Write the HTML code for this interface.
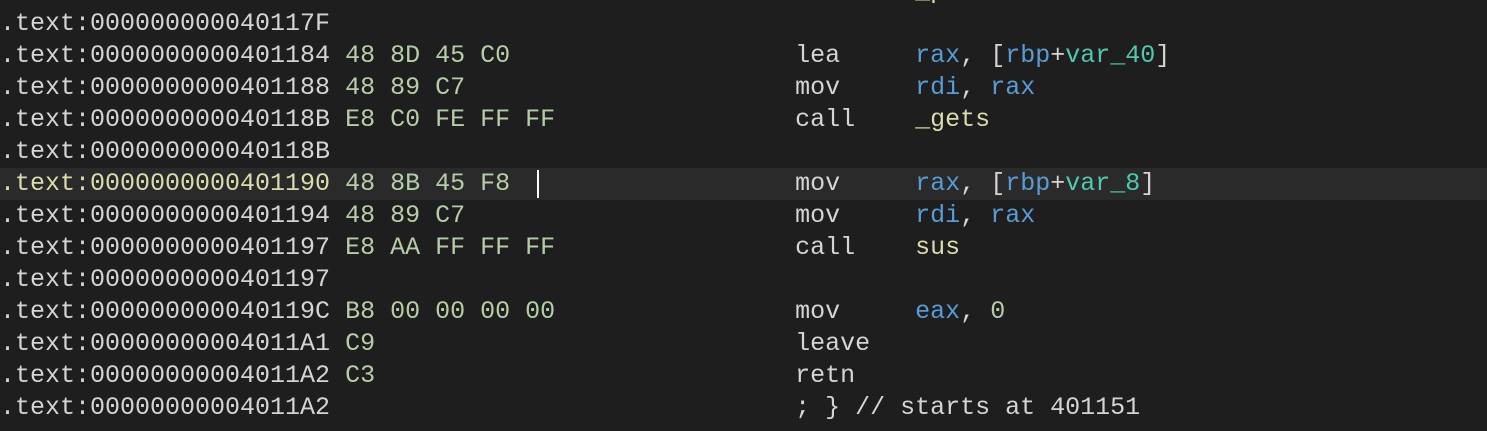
<html><head><style>
body{margin:0;background:#1e1e1e;width:1487px;height:431px;overflow:hidden;position:relative}
pre{margin:0;position:absolute;left:0;top:-24px;font:25px/32px "Liberation Mono",monospace;color:#d4d4d4;white-space:pre}
.hl{position:absolute;left:0;top:168px;width:1487px;height:32px;background:#2a2a2a}
.cur{position:absolute;left:537px;top:170px;width:2px;height:28px;background:#fff}
.b{color:#b5cea8}.r{color:#569cd6}.v{color:#4ec9b0}.f{color:#dcdcaa}.y{color:#dcdcaa}
</style></head><body>
<div class="hl"></div><div class="cur"></div>
<pre>.text:000000000040117A <span class="b">E8 A0 FE FF FF</span>                call    <span class="f">_puts</span>
.text:000000000040117F
.text:0000000000401184 <span class="b">48 8D 45 C0</span>                   lea     <span class="r">rax</span>, [<span class="r">rbp</span>+<span class="v">var_40</span>]
.text:0000000000401188 <span class="b">48 89 C7</span>                      mov     <span class="r">rdi</span>, <span class="r">rax</span>
.text:000000000040118B <span class="b">E8 C0 FE FF FF</span>                call    <span class="f">_gets</span>
.text:000000000040118B
<span class="y">.text:0000000000401190</span> <span class="b">48 8B 45 F8</span>                   mov     <span class="r">rax</span>, [<span class="r">rbp</span>+<span class="v">var_8</span>]
.text:0000000000401194 <span class="b">48 89 C7</span>                      mov     <span class="r">rdi</span>, <span class="r">rax</span>
.text:0000000000401197 <span class="b">E8 AA FF FF FF</span>                call    <span class="f">sus</span>
.text:0000000000401197
.text:000000000040119C <span class="b">B8 00 00 00 00</span>                mov     <span class="r">eax</span>, <span class="b">0</span>
.text:00000000004011A1 <span class="b">C9</span>                            leave
.text:00000000004011A2 <span class="b">C3</span>                            retn
.text:00000000004011A2                               ; } // starts at 401151
</pre>
</body></html>
